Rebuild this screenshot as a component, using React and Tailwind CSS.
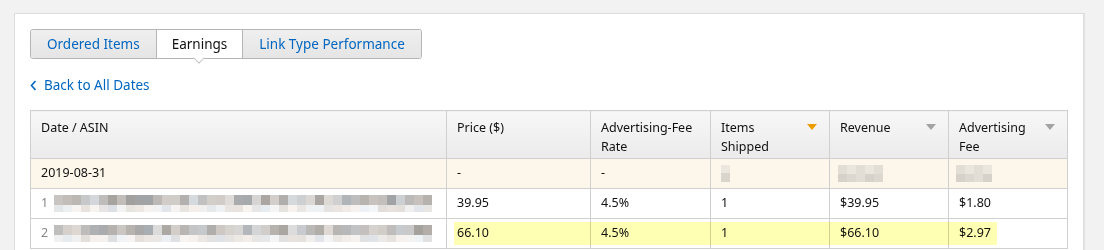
import React from 'react';

const tone = (seed, i, light) => {
  const v = Math.abs(Math.sin(seed * 97.3 + i * 12.9898) * 43758.5453) % 1;
  const base = light ? 222 + Math.round(v * 24) : 160 + Math.round(v * 60);
  const tint = Math.round((Math.abs(Math.sin(i * 3.7 + seed)) - 0.5) * 10);
  return `rgb(${base + tint}, ${base}, ${base - tint})`;
};

// pixelated placeholder for hidden product titles
const Mosaic = ({ seed, count }) => (
  <div className="flex flex-col">
    <div className="flex">
      {Array.from({ length: count }).map((_, i) => (
        <div key={i} className="w-[9px] h-[10px]" style={{ background: tone(seed, i, false) }} />
      ))}
    </div>
    <div className="flex">
      {Array.from({ length: count }).map((_, i) => (
        <div key={i} className="w-[9px] h-[7px]" style={{ background: tone(seed + 5, i, true) }} />
      ))}
    </div>
  </div>
);

const Blur = ({ w }) => (
  <div className="flex flex-col">
    <div className="flex">
      {Array.from({ length: w }).map((_, i) => (
        <div key={i} className="w-[9px] h-[9px]" style={{ background: `rgb(${226 + (i % 2) * 8}, ${222 + (i % 2) * 8}, ${214 + (i % 2) * 8})` }} />
      ))}
    </div>
    <div className="flex">
      {Array.from({ length: w }).map((_, i) => (
        <div key={i} className="w-[9px] h-[8px]" style={{ background: `rgb(${214 + (i % 3) * 6}, ${210 + (i % 3) * 6}, ${202 + (i % 3) * 6})` }} />
      ))}
    </div>
  </div>
);

const SortArrow = ({ active }) => (
  <svg width="10" height="6" viewBox="0 0 10 6" className="mt-[6px] shrink-0">
    <polygon points="0,0 10,0 5,6" fill={active ? '#ec9c00' : '#a3a3a3'} />
  </svg>
);

const HeadCell = ({ children, sort, active }) => (
  <th className="border border-[#d0d0d0] bg-gradient-to-b from-[#f7f7f7] to-[#ebebeb] align-top text-left font-normal px-[10px] pt-[7px] pr-[12px]">
    <div className="flex justify-between gap-2 leading-[19px]">
      <span>{children}</span>
      {sort && <SortArrow active={active} />}
    </div>
  </th>
);

export default function App() {
  const cell = 'border border-[#d0d0d0] px-[10px] align-middle';

  return (
    <div className="min-h-screen bg-[#f2f2f2] pt-[13px] pl-[14px]" style={{ fontFamily: '"Noto Sans", "Open Sans", sans-serif' }}>
      <div className="w-[1070px] bg-white border border-[#dedede] shadow-[1px_0_1px_rgba(0,0,0,0.06)] px-[15px] pt-[15px] pb-8">
        {/* Tabs */}
        <div className="flex">
          <div className="flex h-[30px] border border-[#b5b5b5] rounded-[3px] text-[13.5px]">
            <button className="px-4 bg-gradient-to-b from-[#efefef] to-[#e5e5e5] text-[#0066c0] rounded-l-[3px]">Ordered Items</button>
            <button className="relative px-[15px] bg-white text-[#111] border-x border-[#b5b5b5]">
              Earnings
              <span className="absolute left-1/2 top-full -ml-[4px] -mt-[4px] w-[8px] h-[8px] rotate-45 bg-white border-r border-b border-[#c8c8c8]" />
            </button>
            <button className="px-4 bg-gradient-to-b from-[#efefef] to-[#e5e5e5] text-[#0066c0] rounded-r-[3px]">Link Type Performance</button>
          </div>
        </div>

        {/* Back link */}
        <div className="mt-[16px] flex items-center gap-[7px] text-[13.5px] text-[#0066c0] leading-5">
          <svg width="7" height="11" viewBox="0 0 7 11">
            <path d="M5.5 1 L1.5 5.5 L5.5 10" stroke="#0066c0" strokeWidth="1.6" fill="none" />
          </svg>
          <span>Back to All Dates</span>
        </div>

        {/* Table */}
        <table className="mt-[15px] table-fixed border-collapse w-[1037px] text-[12.5px] text-[#111]">
          <colgroup>
            <col className="w-[416px]" />
            <col className="w-[144px]" />
            <col className="w-[120px]" />
            <col className="w-[119px]" />
            <col className="w-[119px]" />
            <col className="w-[119px]" />
          </colgroup>
          <thead>
            <tr className="h-[48px]">
              <HeadCell>Date / ASIN</HeadCell>
              <HeadCell>Price ($)</HeadCell>
              <HeadCell>Advertising-Fee Rate</HeadCell>
              <HeadCell sort active>Items Shipped</HeadCell>
              <HeadCell sort>Revenue</HeadCell>
              <HeadCell sort>Advertising Fee</HeadCell>
            </tr>
          </thead>
          <tbody>
            <tr className="h-[30px] bg-[#fdf6ea]">
              <td className={cell}>2019-08-31</td>
              <td className={cell}>-</td>
              <td className={cell}>-</td>
              <td className={cell}><div className="flex flex-col w-[9px]"><div className="h-[8px] bg-[#ebe6de]" /><div className="h-[9px] bg-[#d9d4cc]" /></div></td>
              <td className={`${cell} pl-[8px]`}><Blur w={5} /></td>
              <td className={`${cell} pl-[7px]`}><Blur w={4} /></td>
            </tr>
            <tr className="h-[30px]">
              <td className={cell}>
                <div className="flex items-center gap-[6px]">
                  <span className="text-[#888]">1</span>
                  <Mosaic seed={1} count={42} />
                </div>
              </td>
              <td className={cell}>39.95</td>
              <td className={cell}>4.5%</td>
              <td className={cell}>1</td>
              <td className={cell}>$39.95</td>
              <td className={cell}>$1.80</td>
            </tr>
            <tr className="h-[30px]">
              <td className={cell}>
                <div className="flex items-center gap-[6px]">
                  <span className="text-[#888]">2</span>
                  <Mosaic seed={7} count={42} />
                </div>
              </td>
              <td className={`${cell} relative`}>
                66.10
                <span className="absolute left-[7px] top-[3px] h-[23px] w-[543px] bg-[#ffffb4] mix-blend-multiply z-10 pointer-events-none" />
              </td>
              <td className={cell}>4.5%</td>
              <td className={cell}>1</td>
              <td className={cell}>$66.10</td>
              <td className={cell}>$2.97</td>
            </tr>
          </tbody>
        </table>
      </div>
    </div>
  );
}
